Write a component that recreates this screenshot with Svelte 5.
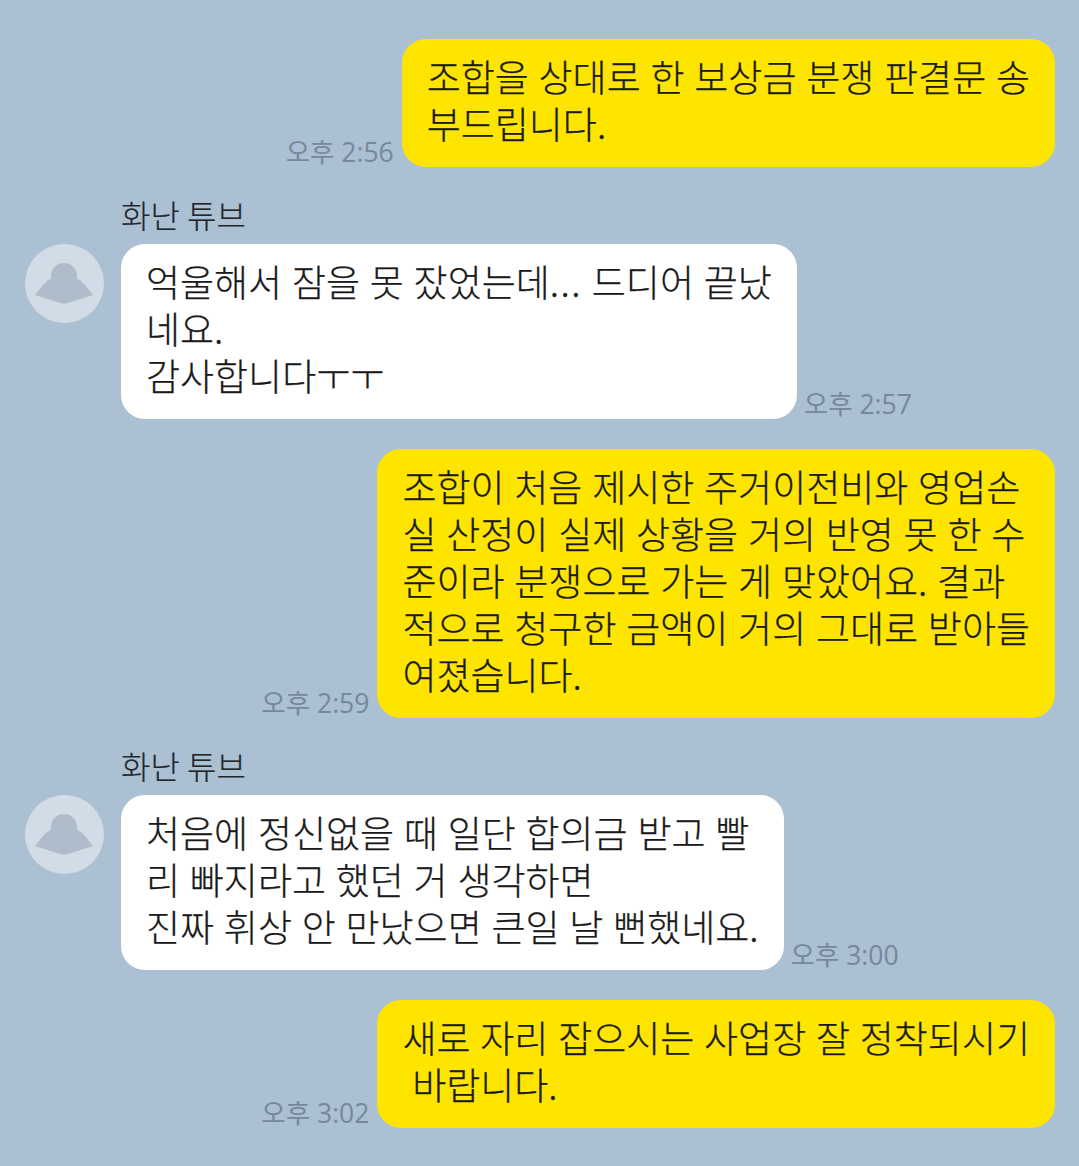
<script>
  const messages = [
    { me: true, time: '오후 2:56', lines: ['조합을 상대로 한 보상금 분쟁 판결문 송', '부드립니다.'] },
    { me: false, time: '오후 2:57', name: '화난 튜브', lines: ['억울해서 잠을 못 잤었는데... 드디어 끝났', '네요.', '감사합니다ㅜㅜ'] },
    { me: true, time: '오후 2:59', lines: ['조합이 처음 제시한 주거이전비와 영업손', '실 산정이 실제 상황을 거의 반영 못 한 수', '준이라 분쟁으로 가는 게 맞았어요. 결과', '적으로 청구한 금액이 거의 그대로 받아들', '여졌습니다.'] },
    { me: false, time: '오후 3:00', name: '화난 튜브', lines: ['처음에 정신없을 때 일단 합의금 받고 빨', '리 빠지라고 했던 거 생각하면', '진짜 휘상 안 만났으면 큰일 날 뻔했네요.'] },
    { me: true, time: '오후 3:02', lines: ['새로 자리 잡으시는 사업장 잘 정착되시기', ' 바랍니다.'] }
  ];
</script>

{#snippet text(lines)}
  {#each lines as l}
    <div class="line">
      {#if l.includes('...')}
        {l.split('...')[0]}<span class="dots">...</span>{l.split('...')[1]}
      {:else}
        {l}
      {/if}
    </div>
  {/each}
{/snippet}

<main class="chat">
  {#each messages as m}
    {#if m.me}
      <div class="row me">
        <span class="time">{m.time}</span>
        <div class="bubble yellow">{@render text(m.lines)}</div>
      </div>
    {:else}
      <div class="row other">
        <div class="avatar">
          <svg viewBox="0 0 79 79" width="79" height="79">
            <circle cx="39.5" cy="39.5" r="39.5" fill="#d2dce7" />
            <path d="M10 51 L18 41 Q21 37 26 34.5 C25 25 31 19 39 19 C47 19 53 25 52 34.5 Q57 37 60 41 L68 51 L43 59 Q39 60 35 59 Z" fill="#aebccb" />
          </svg>
        </div>
        <div class="body">
          <div class="name">{m.name}</div>
          <div class="bubble-wrap">
            <div class="bubble white">{@render text(m.lines)}</div>
            <span class="time">{m.time}</span>
          </div>
        </div>
      </div>
    {/if}
  {/each}
</main>

<style>
  :global(body) {
    background: #abc0d2;
  }
  .chat {
    box-sizing: border-box;
    height: 1166px;
    padding: 39px 24px 0 25px;
    display: flex;
    flex-direction: column;
    font-family: "Noto Sans CJK KR", "Noto Sans", sans-serif;
    font-weight: 300;
    color: #1a1a1a;
    overflow: hidden;
  }
  .row.me {
    display: flex;
    justify-content: flex-end;
    align-items: flex-end;
    gap: 8px;
    margin-bottom: 30px;
  }
  .row.other {
    display: flex;
    gap: 17px;
    margin-bottom: 30px;
  }
  .avatar {
    margin-top: 47px;
    width: 79px;
    height: 79px;
  }
  .avatar svg {
    display: block;
  }
  .name {
    font-size: 32px;
    line-height: 35px;
    height: 47px;
    color: #23272b;
    -webkit-text-stroke: 0.2px currentColor;
  }
  .bubble-wrap {
    display: flex;
    align-items: flex-end;
    gap: 7px;
  }
  .bubble {
    border-radius: 24px;
    padding: 14px 25px 20px;
    font-size: 37px;
    word-spacing: 1.6px;
    line-height: 47px;
    -webkit-text-stroke: 0.25px currentColor;
  }
  .line {
    white-space: pre;
    height: 47px;
  }
  .dots {
    letter-spacing: 1.5px;
  }
  .yellow { background: #fee500; }
  .white { background: #fff; }
  .time {
    font-family: "Open Sans", "Noto Sans CJK KR", sans-serif;
    font-weight: 400;
    font-size: 26.5px;
    line-height: 30px;
    color: #76889a;
    white-space: nowrap;
  }
</style>
